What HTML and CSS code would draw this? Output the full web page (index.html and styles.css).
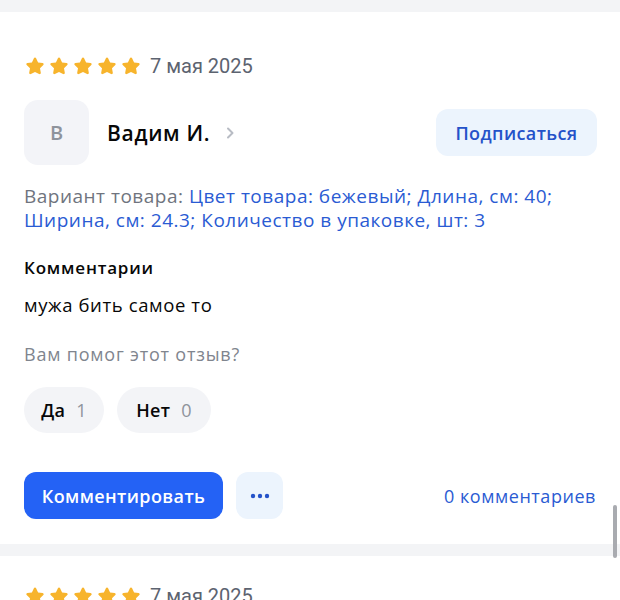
FILE: index.html
```html
<!DOCTYPE html>
<html lang="ru">
<head>
<meta charset="utf-8">
<link rel="stylesheet" href="styles.css">
</head>
<body>
<div class="sep"></div>
<section class="review">
  <div class="rating">
    <div class="stars">
      <svg class="star" viewBox="0 0 20 20"><path d="M10 1.6c.5 0 .9.3 1.1.7l2 4.2 4.5.6c1 .1 1.4 1.3.7 2l-3.3 3.2.8 4.5c.2 1-.9 1.7-1.7 1.2L10 15.9 5.9 18c-.8.5-1.9-.2-1.7-1.2l.8-4.5-3.3-3.2c-.7-.7-.3-1.9.7-2l4.5-.6 2-4.2c.2-.4.6-.7 1.1-.7z"/></svg>
      <svg class="star" viewBox="0 0 20 20"><path d="M10 1.6c.5 0 .9.3 1.1.7l2 4.2 4.5.6c1 .1 1.4 1.3.7 2l-3.3 3.2.8 4.5c.2 1-.9 1.7-1.7 1.2L10 15.9 5.9 18c-.8.5-1.9-.2-1.7-1.2l.8-4.5-3.3-3.2c-.7-.7-.3-1.9.7-2l4.5-.6 2-4.2c.2-.4.6-.7 1.1-.7z"/></svg>
      <svg class="star" viewBox="0 0 20 20"><path d="M10 1.6c.5 0 .9.3 1.1.7l2 4.2 4.5.6c1 .1 1.4 1.3.7 2l-3.3 3.2.8 4.5c.2 1-.9 1.7-1.7 1.2L10 15.9 5.9 18c-.8.5-1.9-.2-1.7-1.2l.8-4.5-3.3-3.2c-.7-.7-.3-1.9.7-2l4.5-.6 2-4.2c.2-.4.6-.7 1.1-.7z"/></svg>
      <svg class="star" viewBox="0 0 20 20"><path d="M10 1.6c.5 0 .9.3 1.1.7l2 4.2 4.5.6c1 .1 1.4 1.3.7 2l-3.3 3.2.8 4.5c.2 1-.9 1.7-1.7 1.2L10 15.9 5.9 18c-.8.5-1.9-.2-1.7-1.2l.8-4.5-3.3-3.2c-.7-.7-.3-1.9.7-2l4.5-.6 2-4.2c.2-.4.6-.7 1.1-.7z"/></svg>
      <svg class="star" viewBox="0 0 20 20"><path d="M10 1.6c.5 0 .9.3 1.1.7l2 4.2 4.5.6c1 .1 1.4 1.3.7 2l-3.3 3.2.8 4.5c.2 1-.9 1.7-1.7 1.2L10 15.9 5.9 18c-.8.5-1.9-.2-1.7-1.2l.8-4.5-3.3-3.2c-.7-.7-.3-1.9.7-2l4.5-.6 2-4.2c.2-.4.6-.7 1.1-.7z"/></svg>
    </div>
    <span class="date">7 мая 2025</span>
  </div>

  <div class="author">
    <div class="avatar">В</div>
    <span class="name">Вадим И.</span>
    <svg class="chev" viewBox="0 0 10 14"><path d="M3 2.5 7.5 7 3 11.5" fill="none" stroke="#b8bcc4" stroke-width="2" stroke-linecap="round" stroke-linejoin="round"/></svg>
    <button class="subscribe">Подписаться</button>
  </div>

  <p class="variant"><span class="muted">Вариант товара:</span> <span class="link">Цвет товара: бежевый; Длина, см: 40; Ширина, см: 24.3; Количество в упаковке, шт: 3</span></p>

  <h3 class="label">Комментарии</h3>
  <p class="text">мужа бить самое то</p>

  <p class="helpful">Вам помог этот отзыв?</p>
  <div class="votes">
    <button class="pill yes">Да <span class="count">1</span></button>
    <button class="pill no">Нет <span class="count">0</span></button>
  </div>

  <div class="actions">
    <button class="primary">Комментировать</button>
    <button class="more"><svg viewBox="0 0 20 6" width="20" height="6"><circle cx="3" cy="3" r="2.2"/><circle cx="10" cy="3" r="2.2"/><circle cx="17" cy="3" r="2.2"/></svg></button>
    <span class="comments">0 комментариев</span>
  </div>
</section>
<div class="sep"></div>
<section class="review next">
  <div class="rating">
    <div class="stars">
      <svg class="star" viewBox="0 0 20 20"><path d="M10 1.6c.5 0 .9.3 1.1.7l2 4.2 4.5.6c1 .1 1.4 1.3.7 2l-3.3 3.2.8 4.5c.2 1-.9 1.7-1.7 1.2L10 15.9 5.9 18c-.8.5-1.9-.2-1.7-1.2l.8-4.5-3.3-3.2c-.7-.7-.3-1.9.7-2l4.5-.6 2-4.2c.2-.4.6-.7 1.1-.7z"/></svg>
      <svg class="star" viewBox="0 0 20 20"><path d="M10 1.6c.5 0 .9.3 1.1.7l2 4.2 4.5.6c1 .1 1.4 1.3.7 2l-3.3 3.2.8 4.5c.2 1-.9 1.7-1.7 1.2L10 15.9 5.9 18c-.8.5-1.9-.2-1.7-1.2l.8-4.5-3.3-3.2c-.7-.7-.3-1.9.7-2l4.5-.6 2-4.2c.2-.4.6-.7 1.1-.7z"/></svg>
      <svg class="star" viewBox="0 0 20 20"><path d="M10 1.6c.5 0 .9.3 1.1.7l2 4.2 4.5.6c1 .1 1.4 1.3.7 2l-3.3 3.2.8 4.5c.2 1-.9 1.7-1.7 1.2L10 15.9 5.9 18c-.8.5-1.9-.2-1.7-1.2l.8-4.5-3.3-3.2c-.7-.7-.3-1.9.7-2l4.5-.6 2-4.2c.2-.4.6-.7 1.1-.7z"/></svg>
      <svg class="star" viewBox="0 0 20 20"><path d="M10 1.6c.5 0 .9.3 1.1.7l2 4.2 4.5.6c1 .1 1.4 1.3.7 2l-3.3 3.2.8 4.5c.2 1-.9 1.7-1.7 1.2L10 15.9 5.9 18c-.8.5-1.9-.2-1.7-1.2l.8-4.5-3.3-3.2c-.7-.7-.3-1.9.7-2l4.5-.6 2-4.2c.2-.4.6-.7 1.1-.7z"/></svg>
      <svg class="star" viewBox="0 0 20 20"><path d="M10 1.6c.5 0 .9.3 1.1.7l2 4.2 4.5.6c1 .1 1.4 1.3.7 2l-3.3 3.2.8 4.5c.2 1-.9 1.7-1.7 1.2L10 15.9 5.9 18c-.8.5-1.9-.2-1.7-1.2l.8-4.5-3.3-3.2c-.7-.7-.3-1.9.7-2l4.5-.6 2-4.2c.2-.4.6-.7 1.1-.7z"/></svg>
    </div>
    <span class="date">7 мая 2025</span>
  </div>
</section>
<div class="scrollbar"></div>
</body>
</html>
```

FILE: styles.css
```css
* { box-sizing: border-box; }
html, body { margin: 0; padding: 0; background: #fff; overflow: hidden; }
body {
  font-family: "Open Sans", "Noto Sans", sans-serif;
  color: #070707;
  width: 620px;
  height: 600px;
  position: relative;
}
.sep { height: 12px; background: #f3f4f6; }
.review { padding: 43px 23px 25px 24px; }
.review.next { padding-top: 29px; }
.rating { display: flex; align-items: center; height: 22px; }
.stars { display: flex; gap: 4px; margin-right: 9px; margin-left: 1px; }
.star { width: 20px; height: 20px; fill: #f7b42c; }
.date { font-family: "Roboto", sans-serif; font-size: 20px; color: #5c6370; }

.author { display: flex; align-items: center; margin-top: 23px; height: 65px; }
.avatar {
  width: 65px; height: 65px; border-radius: 14px; background: #f3f4f8;
  display: flex; align-items: center; justify-content: center;
  font-size: 20px; font-weight: 600; color: #8e939c;
}
.name { margin-left: 18px; font-size: 21px; font-weight: 600; letter-spacing: 0.7px; }
.chev { width: 10px; height: 14px; margin-left: 15px; }
.subscribe {
  margin-left: auto; height: 47px; width: 161px; border: 0; border-radius: 12px;
  background: #ecf4fd; color: #2452c9; font-family: inherit; font-size: 18px; font-weight: 600;
  letter-spacing: 0.4px;
}

.variant { margin: 19px 0 0; font-size: 19px; line-height: 24px; letter-spacing: 0.5px; }
.muted { color: #6f747e; }
.link { color: #2a5bd3; }

.label { margin: 24px 0 0; font-size: 17px; font-weight: 600; line-height: 24px; letter-spacing: 0.8px; }
.text { margin: 13px 0 0; font-size: 18.5px; line-height: 24px; letter-spacing: 0.6px; }
.helpful { margin: 25px 0 0; font-size: 18px; line-height: 24px; color: #80858e; letter-spacing: 0.8px; }

.votes { display: flex; gap: 13px; margin-top: 21px; }
.pill {
  height: 46px; padding: 0; border: 0; border-radius: 23px; background: #f3f4f7;
  font-family: inherit; font-size: 18px; font-weight: 600; color: #070707; letter-spacing: 0.3px;
}
.pill.yes { width: 80px; }
.pill.no { width: 94px; }
.count { font-weight: 400; color: #8e939c; margin-left: 6px; }

.actions { display: flex; align-items: center; margin-top: 39px; }
.primary {
  height: 47px; width: 199px; border: 0; border-radius: 12px; background: #2462f5;
  color: #fff; font-family: inherit; font-size: 18px; font-weight: 600; letter-spacing: 0.4px;
}
.more {
  margin-left: 13px; width: 47px; height: 47px; border: 0; border-radius: 12px; background: #ecf4fd;
  display: flex; align-items: center; justify-content: center; fill: #2452c9;
}
.comments { margin-left: auto; margin-right: 1px; color: #2a5bd3; font-size: 18px; font-weight: 500; letter-spacing: 0.55px; }

.scrollbar {
  position: absolute; right: 3px; top: 505px; width: 4px; height: 53px;
  border-radius: 2px; background: #a9abb0;
}
```
